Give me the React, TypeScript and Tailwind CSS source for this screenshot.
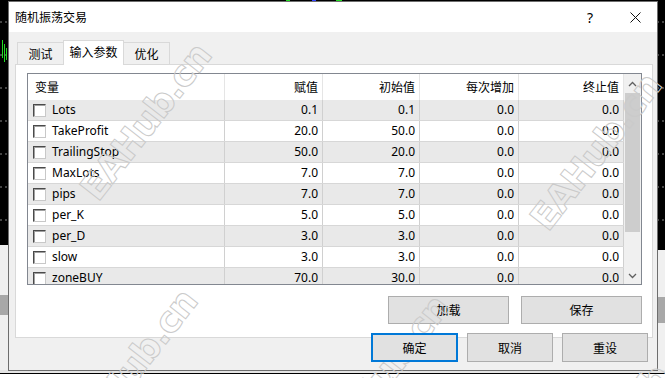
const rows = [
  ["Lots", "0.1", "0.1", "0.0", "0.0"],
  ["TakeProfit", "20.0", "50.0", "0.0", "0.0"],
  ["TrailingStop", "50.0", "20.0", "0.0", "0.0"],
  ["MaxLots", "7.0", "7.0", "0.0", "0.0"],
  ["pips", "7.0", "7.0", "0.0", "0.0"],
  ["per_K", "5.0", "5.0", "0.0", "0.0"],
  ["per_D", "3.0", "3.0", "0.0", "0.0"],
  ["slow", "3.0", "3.0", "0.0", "0.0"],
  ["zoneBUY", "70.0", "30.0", "0.0", "0.0"],
];

const marks = [
  { left: 146, top: 122 },
  { left: 596, top: 152 },
  { left: 132, top: 368 },
  { left: 384, top: 374 },
  { left: 640, top: 398 },
];

function Backdrop() {
  const dashes = [22, 55, 88, 121, 154, 187, 220];
  return (
    <svg className="absolute inset-0" width="665" height="378">
      <rect x="0" y="0" width="665" height="378" fill="#000" />
      <rect x="0" y="245" width="8" height="127" fill="#f0f0f0" />
      <rect x="0" y="295" width="8" height="20" fill="#a8a8a8" />
      <rect x="657" y="250" width="8" height="122" fill="#f0f0f0" />
      <rect x="657" y="297" width="8" height="26" fill="#a8a8a8" />
      <rect x="0" y="370" width="665" height="3" fill="#e4e4e4" />
      <rect x="0" y="373" width="665" height="1" fill="#000" />
      <rect x="0" y="374" width="665" height="4" fill="#fff" />
      {dashes.map((y) => (
        <g key={y}>
          <line x1="0" y1={y} x2="8" y2={y} stroke="#8a8a8a" strokeDasharray="2 3" />
          <line x1="657" y1={y} x2="665" y2={y} stroke="#8a8a8a" strokeDasharray="2 3" />
        </g>
      ))}
      <line x1="2.5" y1="40" x2="2.5" y2="58" stroke="#22dd22" />
      <line x1="4.5" y1="44" x2="4.5" y2="62" stroke="#22dd22" />
      <line x1="6.5" y1="48" x2="6.5" y2="60" stroke="#22dd22" />
      <rect x="286" y="0" width="4" height="1" fill="#22dd22" />
      <rect x="312" y="0" width="4" height="1" fill="#3344ff" />
      <rect x="336" y="0" width="6" height="1" fill="#22dd22" />
    </svg>
  );
}

function Checkbox() {
  return (
    <span className="w-[13px] h-[13px] shrink-0 bg-white border border-t-[#4a4a4a] border-l-[#4a4a4a] border-r-[#c8c8c8] border-b-[#c8c8c8] shadow-[inset_1px_1px_0_#a0a0a0]" />
  );
}

function Chevron({ up }: { up?: boolean }) {
  return (
    <svg width="9" height="6" viewBox="0 0 9 6">
      <path
        d={up ? "M1 5 L4.5 1.5 L8 5" : "M1 1 L4.5 4.5 L8 1"}
        fill="none"
        stroke="#606060"
        strokeWidth="1.3"
      />
    </svg>
  );
}

function Button({ label, className }: { label: string; className: string }) {
  return (
    <div
      className={
        "flex items-center justify-center bg-[#e1e1e1] text-[12px] text-black " + className
      }
    >
      {label}
    </div>
  );
}

export default function App() {
  return (
    <div className="relative w-[665px] h-[378px] overflow-hidden bg-black [font-family:'Noto_Sans','Noto_Sans_CJK_SC',sans-serif] text-black">
      <Backdrop />

      <div className="relative ml-[8px] mt-[1px] w-[650px] h-[370px] border border-[#6e6e6e] bg-[#f0f0f0] flex flex-col">
        {/* title bar */}
        <div className="h-[30px] bg-white flex items-center pl-[6px] shrink-0">
          <span className="text-[12px] [font-family:'Noto_Sans_CJK_SC',sans-serif]">随机振荡交易</span>
          <span className="ml-auto text-[14px] mr-[37px] mt-[1px]">?</span>
          <svg width="11" height="11" viewBox="0 0 11 11" className="mr-[16px]">
            <path d="M0.5 0.5 L10.5 10.5 M10.5 0.5 L0.5 10.5" stroke="#111" strokeWidth="1" />
          </svg>
        </div>

        {/* body */}
        <div className="flex-1 flex flex-col pl-[6px] pr-[4px] pt-[8px]">
          <div className="relative z-10 h-[24px] flex items-end pl-[2px] text-[12px] [font-family:'Noto_Sans_CJK_SC',sans-serif]">
            <div className="w-[46px] h-[22px] flex items-center justify-center border-l border-t border-[#d9d9d9] bg-[#f0f0f0]">
              测试
            </div>
            <div className="w-[61px] h-[25px] -mb-px flex items-center justify-center border-l border-t border-r border-[#d9d9d9] bg-white pb-[2px]">
              输入参数
            </div>
            <div className="w-[46px] h-[22px] flex items-center justify-center border-t border-r border-[#d9d9d9] bg-[#f0f0f0]">
              优化
            </div>
          </div>

          <div className="h-[274px] shrink-0 border border-[#d9d9d9] bg-white flex flex-col pt-[8px] pl-[11px] pr-[10px]">
            {/* parameter table */}
            <div className="h-[212px] shrink-0 border border-[#828790] flex overflow-hidden">
              <div className="flex-1 flex flex-col overflow-hidden">
                <div className="h-[26px] shrink-0 flex bg-white text-[12px] [font-family:'Noto_Sans_CJK_SC',sans-serif]">
                  <div className="w-[197px] flex items-center pl-[7px] border-r border-[#e5e5e5]">变量</div>
                  <div className="w-[98px] flex items-center justify-end pr-[4px] border-r border-[#e5e5e5]">赋值</div>
                  <div className="w-[97px] flex items-center justify-end pr-[4px] border-r border-[#e5e5e5]">初始值</div>
                  <div className="w-[99px] flex items-center justify-end pr-[4px] border-r border-[#e5e5e5]">每次增加</div>
                  <div className="flex-1 flex items-center justify-end pr-[4px] border-r border-[#e5e5e5]">终止值</div>
                </div>
                {rows.map((r, i) => (
                  <div
                    key={r[0]}
                    className={
                      "h-[21px] shrink-0 flex text-[12px] border-b border-[#d7d7d7] " +
                      (i % 2 === 0 ? "bg-[#e9e9e9]" : "bg-white")
                    }
                  >
                    <div className="w-[197px] flex items-center gap-[6px] pl-[5px] border-r border-[#d0d0d0]">
                      <Checkbox />
                      <span>{r[0]}</span>
                    </div>
                    <div className="w-[98px] flex items-center justify-end pr-[4px] border-r border-[#d0d0d0]">{r[1]}</div>
                    <div className="w-[97px] flex items-center justify-end pr-[4px] border-r border-[#d0d0d0]">{r[2]}</div>
                    <div className="w-[99px] flex items-center justify-end pr-[4px] border-r border-[#d0d0d0]">{r[3]}</div>
                    <div className="flex-1 flex items-center justify-end pr-[4px] border-r border-[#d0d0d0]">{r[4]}</div>
                  </div>
                ))}
              </div>
              {/* scrollbar */}
              <div className="w-[17px] shrink-0 bg-[#f0f0f0] flex flex-col">
                <div className="h-[19px] flex items-center justify-center">
                  <Chevron up />
                </div>
                <div className="h-[139px] mx-px bg-[#cdcdcd]" />
                <div className="flex-1" />
                <div className="h-[17px] flex items-center justify-center">
                  <Chevron />
                </div>
              </div>
            </div>

            <div className="mt-[11px] flex justify-end gap-[12px] [font-family:'Noto_Sans_CJK_SC',sans-serif]">
              <Button label="加载" className="w-[121px] h-[28px] border border-[#adadad]" />
              <Button label="保存" className="w-[121px] h-[28px] border border-[#adadad]" />
            </div>
          </div>

          <div className="relative z-10 -mt-[5px] mr-[5px] flex justify-end gap-[9px] [font-family:'Noto_Sans_CJK_SC',sans-serif]">
            <Button label="确定" className="w-[87px] h-[29px] border-2 border-[#0078d7]" />
            <Button label="取消" className="w-[86px] h-[29px] border border-[#adadad]" />
            <Button label="重设" className="w-[86px] h-[29px] border border-[#adadad]" />
          </div>
        </div>
      </div>

      {/* watermark */}
      {marks.map((m, i) => (
        <div
          key={i}
          className="pointer-events-none absolute -translate-x-1/2 -translate-y-1/2 -rotate-[52deg] whitespace-nowrap text-[36px] font-bold text-transparent [-webkit-text-stroke:1px_#cacaca] [font-family:'DejaVu_Sans',sans-serif] tracking-[-1px]"
          style={{ left: m.left, top: m.top }}
        >
          EAHub.cn
        </div>
      ))}
    </div>
  );
}
